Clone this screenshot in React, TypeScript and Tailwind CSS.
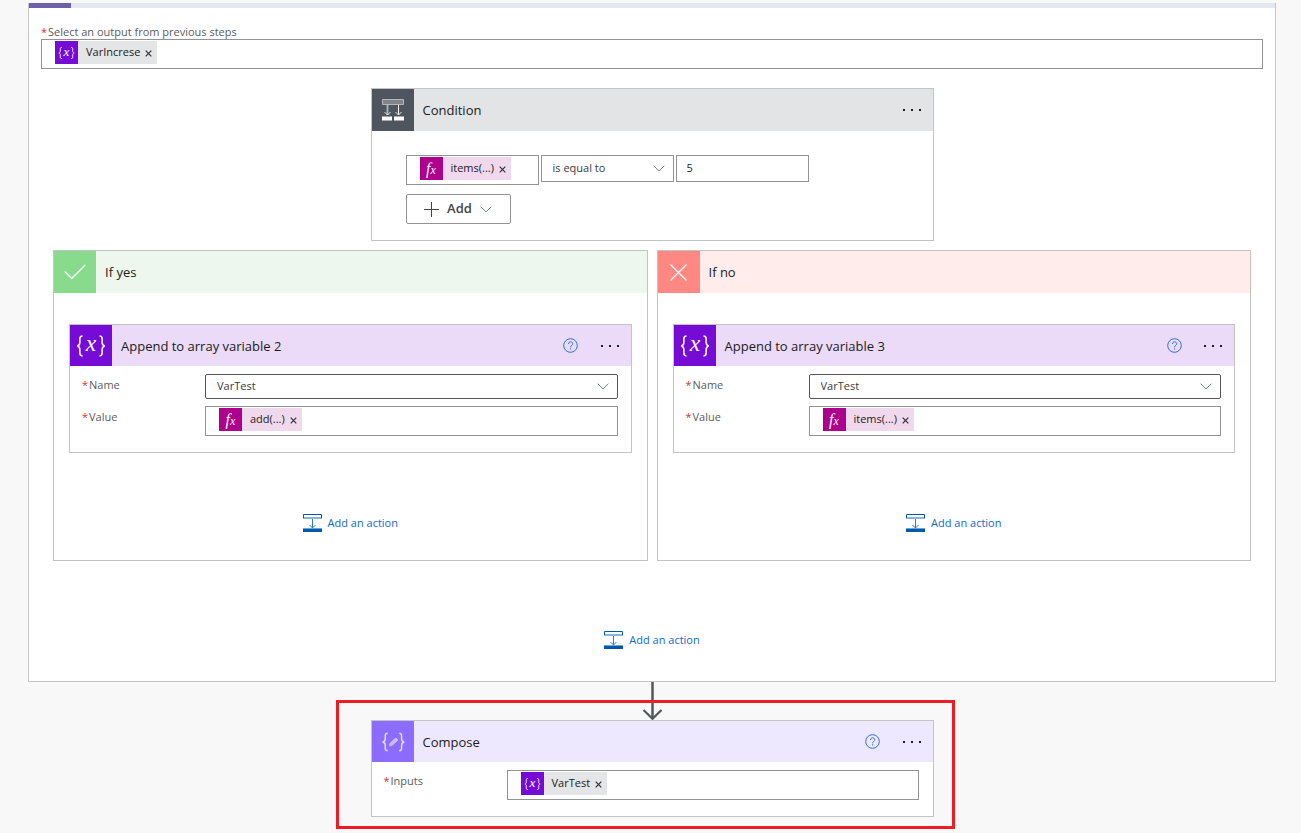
import { useId, type ReactNode } from "react";

function VariableIcon({ className }: { className: string }) {
  return (
    <svg viewBox="0 0 36 38" className={className} fill="none" stroke="white" strokeWidth="1.6" aria-hidden="true">
      <path d="M9 8.500c-2.400 0-2.800 1-2.800 3v3.800c0 2-.6 3.200-2.700 3.700 2.100.5 2.700 1.700 2.700 3.700v3.800c0 2 .4 3 2.800 3" />
      <path d="M27 8.500c2.400 0 2.800 1 2.800 3v3.800c0 2 .6 3.200 2.700 3.700-2.100.5-2.700 1.700-2.700 3.700v3.800c0 2-.4 3-2.800 3" />
      <text
        x="18"
        y="24"
        textAnchor="middle"
        fill="white"
        stroke="none"
        fontSize="25"
        fontStyle="italic"
        fontFamily="Liberation Serif, serif"
      >
        x
      </text>
    </svg>
  );
}

function ComposeIcon() {
  return (
    <svg viewBox="0 0 36 38" className="h-8 w-[30px]" fill="none" stroke="#e4dcff" strokeWidth="1.7" aria-hidden="true">
      <path d="M11.500 8.500c-2.400 0-2.800 1-2.800 3v3.500c0 2-.8 3.500-3.200 4 2.400.5 3.200 2 3.200 4v3.500c0 2 .4 3 2.800 3" />
      <path d="M25.500 8.500c2.400 0 2.800 1 2.800 3v3.500c0 2 .8 3.500 3.200 4-2.400.5-3.200 2-3.200 4v3.500c0 2-.4 3-2.800 3" />
      <path d="M13.500 24l1-3.500 7-6.500 2.500 2.500-7 6.500z" fill="#cbbcff" stroke="#cbbcff" strokeWidth="1" />
    </svg>
  );
}

function ConditionIcon() {
  return (
    <svg viewBox="0 0 22 22" className="h-[22px] w-[22px]" fill="none" aria-hidden="true">
      <path d="M.5.5h21v5H.5z" fill="#80858b" stroke="#b4b6b8" />
      <path d="M5.500 6v10" stroke="#a9acb0" strokeWidth="2" />
      <path d="M16.500 6v10" stroke="#fff" />
      <path d="M2.500 13l3 3 3-3M13.500 13l3 3 3-3" stroke="#e4e6e8" />
      <path d="M0 17.500h10v4H0zM12 17.500h10v4H12z" fill="#fff" />
    </svg>
  );
}

function ActionIcon() {
  return (
    <svg viewBox="0 0 19 18" className="h-[18px] w-[19px]" fill="none" aria-hidden="true">
      <path d="M.5 4V.5h18V4" stroke="#0058ad" />
      <path d="M0 3.500h19M0 4.500h19" stroke="#0058ad" strokeOpacity=".45" />
      <path d="M9.500 5v9M6.500 11l3 3 3-3" stroke="#2f7cc4" />
      <path d="M0 14.500h19" stroke="#0058ad" strokeOpacity=".55" />
      <path d="M0 15h19v3H0z" fill="#0058ad" />
    </svg>
  );
}

function Chevron() {
  return (
    <svg viewBox="0 0 12 7" className="h-[7px] w-3" fill="none" stroke="#7b8682" aria-hidden="true">
      <path d="M.7.7L6 6 11.300.7" />
    </svg>
  );
}

function HelpButton() {
  return (
    <button type="button" aria-label="Help" className="flex h-5 w-5 items-center justify-center">
      <svg viewBox="0 0 15 15" className="h-[15px] w-[15px]" fill="none" stroke="#2f6fdc" aria-hidden="true">
        <circle cx="7.500" cy="7.500" r="6.800" />
        <path d="M5.500 6c0-3 4.200-2.700 4.200-.3 0 1.700-2.100 1.600-2.100 3.600M7.600 10.300v1.200" />
      </svg>
    </button>
  );
}

function MoreButton() {
  return (
    <button type="button" aria-label="More options" className="flex h-5 w-[18px] items-center justify-between">
      <span className="size-[2px] bg-[#1c1c28]" />
      <span className="size-[2px] bg-[#1c1c28]" />
      <span className="size-[2px] bg-[#1c1c28]" />
    </button>
  );
}

function Token({ kind, text }: { kind: "variable" | "expression"; text: string }) {
  const variable = kind === "variable";
  return (
    <span className={`flex h-[23px] shrink-0 items-center ${variable ? "bg-[#e3e5e6]" : "bg-[#f1d9ed]"}`}>
      <span
        className={`flex h-[23px] w-[23px] items-center justify-center ${variable ? "bg-[#770bd6]" : "bg-[#ad008c]"}`}
      >
        {variable ? (
          <VariableIcon className="h-5 w-[19px]" />
        ) : (
          <span className="flex items-baseline font-['Liberation_Serif',serif] text-base leading-none text-white italic">
            f<span className="text-xs leading-none">x</span>
          </span>
        )}
      </span>
      <span className="pb-[2px] pl-2 text-[11px] leading-4 text-[#1b1b1b]">{text}</span>
      <button type="button" aria-label={`Remove ${text}`} className="flex h-full items-center px-[5px] pt-[2px]">
        <svg viewBox="0 0 7 7" className="h-[7px] w-[7px]" stroke="#30303c" strokeWidth="1.200" aria-hidden="true">
          <path d="M.7.7l5.600 5.600M6.300.7L.7 6.300" />
        </svg>
      </button>
    </span>
  );
}

function TokenField({
  id,
  label,
  kind,
  text,
}: {
  id?: string;
  label?: string;
  kind: "variable" | "expression";
  text: string;
}) {
  return (
    <div className="flex h-[30px] w-full items-start border border-[#939393] bg-white pt-px pl-[13px]">
      <Token kind={kind} text={text} />
      <input id={id} aria-label={label} type="text" className="h-full min-w-0 flex-1 bg-transparent text-[11px] outline-none" />
    </div>
  );
}

function SelectField({
  id,
  label,
  value,
  className,
}: {
  id?: string;
  label?: string;
  value: string;
  className: string;
}) {
  return (
    <div className="relative w-full">
      <select
        id={id}
        aria-label={label}
        className={`block w-full appearance-none border bg-white px-[11px] text-[11px] text-[#3b3b3b] outline-none ${className}`}
      >
        <option>{value}</option>
      </select>
      <span className="pointer-events-none absolute inset-y-0 right-[9px] flex items-center">
        <Chevron />
      </span>
    </div>
  );
}

function FieldLabel({ htmlFor, children }: { htmlFor: string; children: ReactNode }) {
  return (
    <label htmlFor={htmlFor} className="flex text-[11px] leading-[14px] text-[#5c5c5c]">
      <span className="w-[7px] text-[#d13438]">*</span>
      {children}
    </label>
  );
}

function FieldRow({ id, label, children }: { id: string; label: string; children: ReactNode }) {
  return (
    <div className="flex items-start">
      <div className="w-[123px] shrink-0 pt-1">
        <FieldLabel htmlFor={id}>{label}</FieldLabel>
      </div>
      <div className="min-w-0 flex-1">{children}</div>
    </div>
  );
}

function Header({
  title,
  icon,
  iconColor,
  color,
  height = "h-[42px]",
  children,
}: {
  title: string;
  icon: ReactNode;
  iconColor: string;
  color: string;
  height?: string;
  children?: ReactNode;
}) {
  return (
    <header className={`flex items-center ${height} ${color}`}>
      <span className={`flex h-full w-[42px] shrink-0 items-center justify-center ${iconColor}`}>{icon}</span>
      <h2 className="flex-1 pl-[9px] text-[13px] leading-5 text-[#1b1b1b]">{title}</h2>
      {children && <div className="flex items-center gap-5 pr-3">{children}</div>}
    </header>
  );
}

function AddAction() {
  return (
    <button type="button" className="mx-auto flex items-center gap-[6px] text-[11px] leading-[18px] text-[#1268c8]">
      <ActionIcon />
      Add an action
    </button>
  );
}

function AppendCard({ title, expression }: { title: string; expression: string }) {
  const id = useId();
  return (
    <section className="border border-[#c4c4c4] bg-white">
      <Header
        title={title}
        icon={<VariableIcon className="h-9 w-[34px]" />}
        iconColor="bg-[#770bd6]"
        color="bg-[#ebdaf8]"
        height="h-[41px]"
      >
        <HelpButton />
        <MoreButton />
      </Header>
      <div className="flex flex-col gap-[7px] pt-2 pr-[13px] pb-4 pl-3">
        <FieldRow id={`${id}-name`} label="Name">
          <SelectField id={`${id}-name`} value="VarTest" className="h-[25px] rounded-xs border-[#55555a]" />
        </FieldRow>
        <FieldRow id={`${id}-value`} label="Value">
          <TokenField id={`${id}-value`} kind="expression" text={expression} />
        </FieldRow>
      </div>
    </section>
  );
}

function Branch({
  title,
  icon,
  iconColor,
  color,
  children,
}: {
  title: string;
  icon: ReactNode;
  iconColor: string;
  color: string;
  children: ReactNode;
}) {
  return (
    <section className="border border-[#c4c4c4] bg-white">
      <Header title={title} icon={icon} iconColor={iconColor} color={color} />
      <div className="px-[15px] pt-[31px] pb-7">
        {children}
        <div className="pt-[61px]">
          <AddAction />
        </div>
      </div>
    </section>
  );
}

export default function App() {
  return (
    <main className="min-h-screen bg-[#f8f8f8] pt-[3px] pr-[25px] pb-4 pl-7 font-['Open_Sans','Noto_Sans',sans-serif]">
      <section className="border border-t-0 border-[#c4c4c4] bg-white pb-8">
        <div className="h-[5px] bg-[#e3e7ee]">
          <div className="h-full w-[42px] bg-[#6f5fa9]" />
        </div>

        <div className="px-3 pt-[17px]">
          <FieldLabel htmlFor="previous-output">Select an output from previous steps</FieldLabel>
          <TokenField id="previous-output" kind="variable" text="VarIncrese" />
        </div>

        <section className="mx-auto mt-[19px] w-full max-w-[563px] border border-[#c4c4c4] bg-white">
          <Header title="Condition" icon={<ConditionIcon />} iconColor="bg-[#4e555e]" color="bg-[#e3e4e6]">
            <MoreButton />
          </Header>
          <div className="px-[34px] pt-6 pb-4">
            <div className="grid w-full max-w-[403px] grid-cols-3 items-start gap-[2px]">
              <TokenField label="Left value" kind="expression" text="items(...)" />
              <SelectField label="Operator" value="is equal to" className="h-[27px] border-[#939393]" />
              <input
                aria-label="Right value"
                type="text"
                defaultValue="5"
                className="block h-[27px] w-full min-w-0 border border-[#939393] px-[10px] pb-[2px] text-[11px] text-[#1b1b1b] outline-none"
              />
            </div>
            <button
              type="button"
              className="mt-[9px] flex h-[30px] w-[105px] items-center justify-center gap-2 rounded-xs border border-[#939393] text-[13px] font-semibold text-[#444]"
            >
              <svg viewBox="0 0 15 15" className="h-[15px] w-[15px]" stroke="#444" aria-hidden="true">
                <path d="M7.500 0v15M0 7.500h15" />
              </svg>
              Add
              <Chevron />
            </button>
          </div>
        </section>

        <div className="mt-[9px] grid grid-cols-2 gap-[9px] px-6">
          <Branch
            title="If yes"
            iconColor="bg-[#88da8d]"
            color="bg-[#edf7ee]"
            icon={
              <svg viewBox="0 0 22 16" className="h-4 w-[22px]" fill="none" stroke="white" strokeWidth="1.300" aria-hidden="true">
                <path d="M.7 7.500l7 7L21.300.9" />
              </svg>
            }
          >
            <AppendCard title="Append to array variable 2" expression="add(...)" />
          </Branch>
          <Branch
            title="If no"
            iconColor="bg-[#ff8982]"
            color="bg-[#ffeceb]"
            icon={
              <svg viewBox="0 0 17 17" className="h-[17px] w-[17px]" fill="none" stroke="white" strokeWidth="1.200" aria-hidden="true">
                <path d="M.5.5l16 16M16.500.5l-16 16" />
              </svg>
            }
          >
            <AppendCard title="Append to array variable 3" expression="items(...)" />
          </Branch>
        </div>

        <div className="pt-[70px]">
          <AddAction />
        </div>
      </section>

      <svg viewBox="0 0 20 38" className="mx-auto block h-[38px] w-5" fill="none" stroke="#55565a" aria-hidden="true">
        <path d="M10.500 0v36" strokeWidth="2.500" />
        <path d="M1.500 28l9 8.800 9-8.800" strokeWidth="2.200" />
      </svg>

      <div className="relative mx-auto w-full max-w-[563px]">
        <section className="border border-[#c4c4c4] bg-white">
          <Header
            title="Compose"
            icon={<ComposeIcon />}
            iconColor="bg-[#8c6cff]"
            color="bg-[#eee8fe]"
            height="h-[41px]"
          >
            <HelpButton />
            <MoreButton />
          </Header>
          <div className="pt-2 pr-[14px] pb-4 pl-3">
            <FieldRow id="compose-inputs" label="Inputs">
              <TokenField id="compose-inputs" kind="variable" text="VarTest" />
            </FieldRow>
          </div>
        </section>
        <div className="pointer-events-none absolute -top-5 -right-[21px] -bottom-3 -left-[35px] border-3 border-[#ed1c24]" />
      </div>
    </main>
  );
}
